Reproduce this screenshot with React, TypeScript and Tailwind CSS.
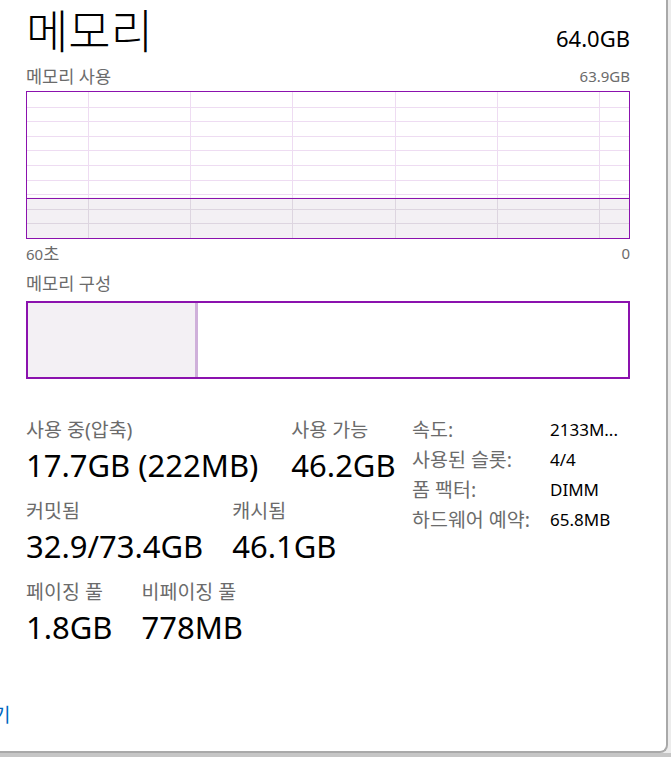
import React from 'react';

const PURPLE = '#8b12ae';

const font = "font-['Noto_Sans','Noto_Sans_CJK_KR',sans-serif]";

/** Memory usage chart: grid plus the filled area for the in-use share. */
function UsageGraph({ used }: { used: number }) {
  const w = 602;
  const h = 146;
  const top = h - h * used;
  const rows = Array.from({ length: 9 }, (_, i) => (i + 1) * (h / 10));
  const cols = Array.from({ length: 6 }, (_, i) => 61 + i * 102.2);
  return (
    <div className="h-[148px] border border-[#8b12ae] bg-white">
      <svg width={w} height={h} className="block">
        <rect x={0} y={top} width={w} height={h - top} fill="#f3f0f4" />
        {rows.map((y) => (
          <line key={y} x1={0} x2={w} y1={Math.round(y) + 0.5} y2={Math.round(y) + 0.5} stroke={y > top ? '#ddd5e0' : '#eedcf2'} />
        ))}
        {cols.map((x) => (
          <g key={x}>
            <line x1={Math.round(x) + 0.5} x2={Math.round(x) + 0.5} y1={0} y2={top} stroke="#eedcf2" />
            <line x1={Math.round(x) + 0.5} x2={Math.round(x) + 0.5} y1={top} y2={h} stroke="#ddd5e0" />
          </g>
        ))}
        <line x1={0} x2={w} y1={Math.round(top) + 0.5} y2={Math.round(top) + 0.5} stroke={PURPLE} />
      </svg>
    </div>
  );
}

function Stat({ label, value }: { label: string; value: string }) {
  return (
    <div className="flex flex-col">
      <div className="flex h-[30px] items-center text-[19.5px] text-[#6b6b6b]">{label}</div>
      <div className="flex h-[40px] items-center text-[31px] text-black">{value}</div>
    </div>
  );
}

const specs: [string, string][] = [
  ['속도:', '2133M...'],
  ['사용된 슬롯:', '4/4'],
  ['폼 팩터:', 'DIMM'],
  ['하드웨어 예약:', '65.8MB'],
];

export default function App() {
  return (
    <div className={`flex h-[757px] w-[671px] flex-col overflow-hidden bg-[#ececec] ${font}`}>
      <div className="flex h-[753px] w-[668px] flex-col rounded-br-[8px] border-r-2 border-b-2 border-[#a9a9a9] bg-white">
        <div className="flex flex-col pl-[26px] pr-[36px]">
          <div className="flex h-[62px] items-start justify-between">
            <h1 className="flex h-[60px] items-center text-[46px] leading-none font-light text-black">메모리</h1>
            <span className="mt-[27px] text-[22px] leading-none text-black">64.0GB</span>
          </div>

          <div className="flex h-[28px] items-center justify-between text-[15px] text-[#6b6b6b]">
            <span className="text-[17.5px]">메모리 사용</span>
            <span>63.9GB</span>
          </div>
          <div className="mt-[1px]">
            <UsageGraph used={0.277} />
          </div>
          <div className="flex h-[28px] items-center justify-between text-[15px] text-[#6b6b6b]">
            <span>
              60<span className="text-[17.5px]">초</span>
            </span>
            <span>0</span>
          </div>
          <div className="flex h-[32px] items-center text-[17.5px] text-[#6b6b6b]">메모리 구성</div>

          <div className="mt-[2px] flex h-[78px] border-2 border-[#8b12ae]">
            <div className="w-[167px] bg-[#f3f0f4]" />
            <div className="w-[3px] bg-[#cfb0da]" />
            <div className="flex-1 bg-white" />
          </div>

          <div className="mt-[36px] flex">
            <div className="flex w-[386px] flex-col gap-[11px]">
              <div className="flex gap-[33px]">
                <Stat label="사용 중(압축)" value="17.7GB (222MB)" />
                <Stat label="사용 가능" value="46.2GB" />
              </div>
              <div className="flex gap-[29px]">
                <Stat label="커밋됨" value="32.9/73.4GB" />
                <Stat label="캐시됨" value="46.1GB" />
              </div>
              <div className="flex gap-[29px]">
                <Stat label="페이징 풀" value="1.8GB" />
                <Stat label="비페이징 풀" value="778MB" />
              </div>
            </div>
            <div className="grid grid-cols-[138px_auto] content-start">
              {specs.map(([k, v]) => (
                <React.Fragment key={k}>
                  <div className="flex h-[30px] items-center text-[19.5px] text-[#6b6b6b]">{k}</div>
                  <div className="flex h-[30px] items-center text-[17px] text-black">{v}</div>
                </React.Fragment>
              ))}
            </div>
          </div>
        </div>

        <div className="mt-auto mb-[24px] flex h-[24px] items-center">
          <span className="-ml-[7px] text-[19px] leading-none text-[#0067c0]">기</span>
        </div>
      </div>
      <div className="h-[4px] w-full bg-[#c6c6c6]" />
    </div>
  );
}
